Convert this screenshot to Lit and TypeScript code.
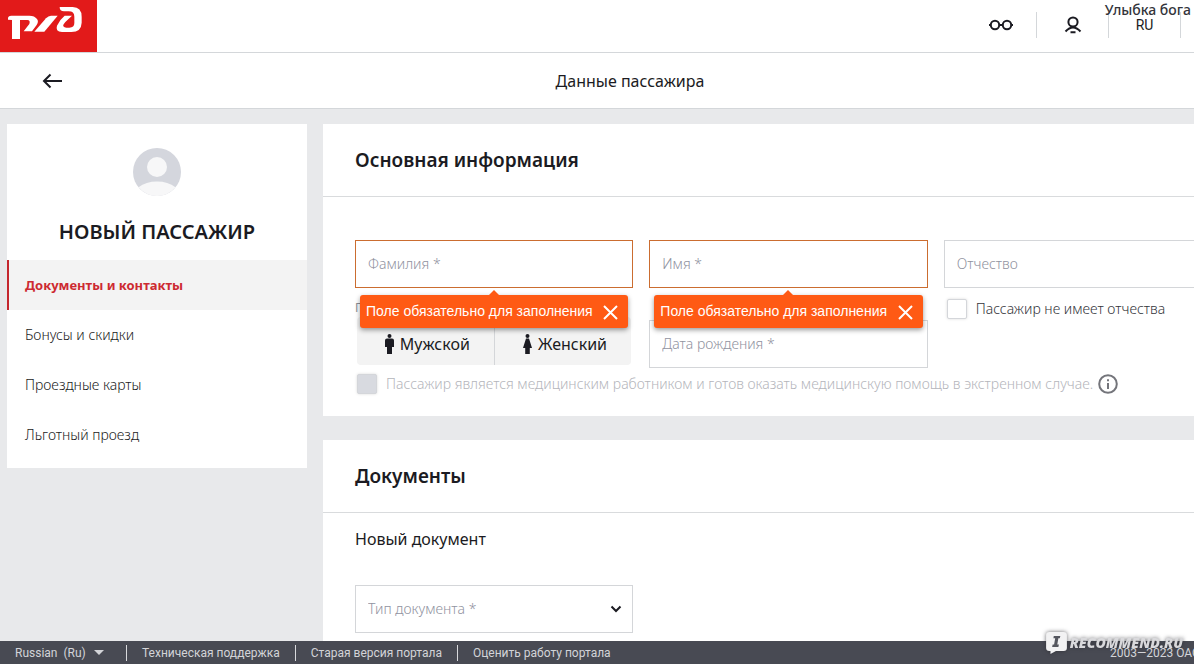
import { LitElement, html, css, svg } from "lit";
import { customElement, property } from "lit/decorators.js";
import { classMap } from "lit/directives/class-map.js";

const closeIcon = svg`<path d="M2 2 15 15M15 2 2 15" fill="none" stroke="currentColor" stroke-width="2"/>`;

@customElement("text-field")
export class TextField extends LitElement {
  @property() label = "";
  @property() error = "";

  static styles = css`
    :host { display: block; position: relative; }
    * { box-sizing: border-box; }
    .input {
      display: block; width: 100%; height: 48px; padding: 0 12px 2px;
      border: 1px solid #d4d6d9; border-radius: 0; background: #fff; outline: none;
      font: 300 14px/20px "Noto Sans", sans-serif; color: #1b1b22;
    }
    .input::placeholder { color: #9092a0; opacity: 1; }
    .invalid { border-color: #cb6d30; }
    .tip {
      position: absolute; z-index: 2; left: 5px; right: 5px; top: 55px; height: 33px;
      display: flex; align-items: center; justify-content: space-between;
      padding: 0 9px 1px 6px; border-radius: 3px; background: #ff5a14; color: #fff;
      box-shadow: 0 2px 5px rgba(0, 0, 0, 0.4);
      font: 14px/20px "Liberation Sans", sans-serif; white-space: nowrap;
    }
    .tip::before {
      content: ""; position: absolute; left: 50%; top: -5px; margin-left: -5px;
      border: 5px solid transparent; border-top: 0; border-bottom-color: #ff5a14;
    }
    .close { padding: 0; border: 0; background: none; color: #fff; width: 17px; height: 15px; }
    .close svg { display: block; }
  `;

  render() {
    return html`
      <input class=${classMap({ input: true, invalid: !!this.error })} type="text"
        placeholder=${this.label} aria-label=${this.label} aria-invalid=${this.error ? "true" : "false"}>
      ${this.error ? html`
        <div class="tip" role="alert">
          <span>${this.error}</span>
          <button class="close" type="button" aria-label="Закрыть">
            <svg width="17" height="17" viewBox="0 0 17 17">${closeIcon}</svg>
          </button>
        </div>` : ""}
    `;
  }
}

@customElement("app-root")
export class AppRoot extends LitElement {
  private menu = ["Документы и контакты", "Бонусы и скидки", "Проездные карты", "Льготный проезд"];
  private links = ["Техническая поддержка", "Старая версия портала", "Оценить работу портала"];

  static styles = css`
    :host {
      display: flex; flex-direction: column; position: relative; height: 100vh; overflow: hidden;
      background: #e8e9eb; color: #1b1b22; font: 14px/20px "Noto Sans", sans-serif;
    }
    * { box-sizing: border-box; }
    h1, h2, h3, p { margin: 0; }
    a { color: inherit; text-decoration: none; }
    button { font: inherit; color: inherit; border: 0; padding: 0; background: none; }
    svg { display: block; flex: none; }

    .top, .titlebar, .body, .footer { min-width: 1260px; flex: none; }
    .top { display: flex; justify-content: space-between; height: 53px; background: #fff; border-bottom: 1px solid #d4d7da; }
    .logo { width: 97px; height: 52px; background: #e21a1a; }
    .tools { display: flex; align-items: center; height: 50px; padding-right: 7px; }
    .tool { display: flex; align-items: center; justify-content: center; width: 72px; height: 26px; border-right: 1px solid #d4d7da; font-family: Roboto, sans-serif; }
    .spare { border-right: 0; }

    .titlebar { display: grid; grid-template-columns: 1fr auto 1fr; align-items: center; height: 56px; padding: 0 42px; background: #fff; border-bottom: 1px solid #d4d7da; }
    .back { width: 20px; }
    .title { font-size: 16px; font-weight: 400; line-height: 24px; }

    .body { display: flex; align-items: flex-start; gap: 16px; padding: 15px 6px 0 7px; flex: 1 1 0; min-height: 0; }
    .side { flex: none; width: 300px; padding: 24px 0 8px; background: #fff; }
    .avatar { margin: 0 auto; }
    .name { padding: 20px 0 12px; text-align: center; font-size: 20px; line-height: 32px; font-weight: 600; text-transform: uppercase; }
    .item { display: flex; align-items: center; height: 50px; padding-left: 18px; font-weight: 300; }
    .current { padding-left: 16px; border-left: 2px solid #c4262e; background: #f3f3f3; color: #cd2a31; font-size: 13px; font-weight: 700; }

    .main { flex: 1; display: flex; flex-direction: column; gap: 24px; min-width: 0; }
    .card { background: #fff; }
    .heading { height: 73px; padding: 24px 32px; border-bottom: 1px solid #d9dbdd; font-size: 19px; line-height: 24px; font-weight: 600; }
    .grid { display: grid; grid-template-columns: repeat(3, minmax(0, 1fr)); column-gap: 16px; padding: 43px 32px 22px; }
    .required { z-index: 1; }
    .date { margin-top: 32px; }
    .gender { display: flex; flex-direction: column; padding: 11px 2px 0; }
    .caption { margin-left: -2px; font-size: 12px; line-height: 18px; color: #8d8e96; }
    .choices { display: flex; border-radius: 4px; background: #f3f3f3; }
    .choice { flex: 1; display: flex; align-items: center; justify-content: center; gap: 6px; height: 48px; padding: 6px 0 0 4px; font-size: 16px; }
    .choice + .choice { border-left: 1px solid #d4d6d9; }
    .check { display: flex; align-items: center; gap: 9px; height: 20px; font-weight: 300; color: #33343a; white-space: nowrap; }
    .nomiddle { margin: 11px 0 0 3px; }
    .medic { grid-column: 1 / -1; display: flex; align-items: center; gap: 5px; padding: 6px 0 0 2px; }
    .medic .check { color: #b4b5bb; }
    .box { appearance: none; flex: none; width: 20px; height: 20px; margin: 0; background: #fff; border: 1px solid #d4d6da; border-radius: 2px; box-shadow: 0 0 3px rgba(0, 0, 0, 0.15); }
    .box:disabled { background: #d8dae0; }

    .docs { padding: 14px 32px 32px; }
    .sub { font-size: 16px; line-height: 24px; font-weight: 400; }
    .pick { position: relative; width: 278px; margin-top: 34px; }
    .select { appearance: none; display: block; width: 100%; height: 48px; padding: 0 12px; border: 1px solid #d4d6d9; border-radius: 0; background: #fff; color: #9092a0; font: 300 14px/20px "Noto Sans", sans-serif; }
    .chev { position: absolute; right: 11px; top: 19px; pointer-events: none; }

    .footer { display: flex; align-items: center; height: 23px; background: #484a53; color: #d3d4d8; font: 12px/16px Roboto, sans-serif; }
    .footlang { display: flex; align-items: center; gap: 8px; width: 126px; padding-left: 15px; white-space: pre; }
    .footlink { border-left: 1px solid #d8d9dc; padding: 0 15px; }
    .copy { position: relative; z-index: 4; margin-left: auto; padding-right: 18px; }

    .user { position: absolute; right: 3px; top: 0; font: 500 14px/20px "Noto Sans", sans-serif; color: #33343a; }
    .mark { position: absolute; z-index: 3; right: 11px; bottom: 9px; display: flex; align-items: center; gap: 2px; filter: drop-shadow(0 0 2px rgba(40, 40, 45, 0.7)); color: #d9d9dc; font: italic 800 14px/20px "Open Sans", sans-serif; }
  `;

  render() {
    return html`
      <header class="top">
        <a class="logo" href="#" aria-label="РЖД">
          <svg width="97" height="52" viewBox="0 0 291 156" fill="#fff">
            <path d="M24 59V55Q24 47 34 47H88Q104 47 111 57Q117 65 110 75L96 94H71L88 72Q92 60 82 60H60V117H36V60Z"/>
            <path d="M103 95 138 55Q145 47 153 47H173L133 95Z"/>
            <path d="M179 21H218Q245 22 245 50V68Q244 96 214 96H186Q165 95 171 77Q178 60 194 47H216L196 66Q188 75 190 79Q193 83 199 83H208Q223 83 223 69V50Q223 34 206 34H192Q179 34 179 21Z"/>
          </svg>
        </a>
        <div class="tools">
          <button class="tool" type="button" aria-label="Версия для слабовидящих">
            <svg width="24" height="12" viewBox="0 0 24 12" fill="none" stroke="#1b1b22" stroke-width="2">
              <circle cx="6" cy="6" r="4.2"/><circle cx="18" cy="6" r="4.2"/><path d="M10 6h4M0 6h2M22 6h2"/>
            </svg>
          </button>
          <button class="tool" type="button" aria-label="Личный кабинет">
            <svg width="18" height="18" viewBox="0 0 18 18" fill="none" stroke="#1b1b22" stroke-width="2">
              <circle cx="9" cy="6" r="4.6"/><path d="M1.500 15.500Q9 7.500 16.500 15.500M6.500 16.300h5"/>
            </svg>
          </button>
          <button class="tool" type="button">RU</button>
          <span class="tool spare"></span>
        </div>
      </header>
      <div class="titlebar">
        <button class="back" type="button" aria-label="Назад">
          <svg width="20" height="16" viewBox="0 0 20 16" fill="none" stroke="#1b1b22" stroke-width="2"><path d="M20 8H2M8.500 1.500 2 8 8.500 14.500"/></svg>
        </button>
        <h1 class="title">Данные пассажира</h1>
      </div>
      <div class="body">
        <aside class="side">
          <svg class="avatar" width="48" height="48" viewBox="0 0 48 48">
            <circle cx="24" cy="24" r="24" fill="#d4d6dd"/><circle cx="24" cy="19" r="10" fill="#f7f7f8"/>
            <path d="M5.500 39.300Q13 33.500 24 33.500T42.500 39.300A24 24 0 0 1 5.500 39.300Z" fill="#f7f7f8"/>
          </svg>
          <h2 class="name">Новый пассажир</h2>
          <nav>
            ${this.menu.map((m, i) => html`<a class=${classMap({ item: true, current: i === 0 })} href="#">${m}</a>`)}
          </nav>
        </aside>
        <main class="main">
          <section class="card">
            <h2 class="heading">Основная информация</h2>
            <div class="grid">
              <text-field class="required" label="Фамилия *" error="Поле обязательно для заполнения"></text-field>
              <text-field class="required" label="Имя *" error="Поле обязательно для заполнения"></text-field>
              <text-field label="Отчество"></text-field>
              <div class="gender" role="group" aria-labelledby="sex">
                <span class="caption" id="sex">Пол</span>
                <div class="choices">
                  <button class="choice" type="button">
                    <svg width="9" height="20" viewBox="0 0 9 20" fill="#1b1b22"><circle cx="4.500" cy="2" r="2"/><path d="M2 4.500h5Q9 4.500 9 6.500V13H7V20H2V13H0V6.500Q0 4.500 2 4.500Z"/></svg>
                    Мужской
                  </button>
                  <button class="choice" type="button">
                    <svg width="9" height="20" viewBox="0 0 9 20" fill="#1b1b22"><circle cx="4.500" cy="2" r="2"/><path d="M3 4.500h3L9 14H6.800V20H2.200V14H0Z"/></svg>
                    Женский
                  </button>
                </div>
              </div>
              <text-field class="date" label="Дата рождения *"></text-field>
              <label class="check nomiddle"><input class="box" type="checkbox">Пассажир не имеет отчества</label>
              <div class="medic">
                <label class="check"><input class="box" type="checkbox" disabled>Пассажир является медицинским работником и готов оказать медицинскую помощь в экстренном случае.</label>
                <button type="button" aria-label="Подробнее">
                  <svg width="20" height="20" viewBox="0 0 20 20" fill="none" stroke="#74757b" stroke-width="2"><circle cx="10" cy="10" r="8.800"/><path d="M10 9v6M10 5.200v2"/></svg>
                </button>
              </div>
            </div>
          </section>
          <section class="card">
            <h2 class="heading">Документы</h2>
            <div class="docs">
              <h3 class="sub">Новый документ</h3>
              <div class="pick">
                <select class="select" aria-label="Тип документа"><option>Тип документа *</option></select>
                <svg class="chev" width="12" height="10" viewBox="0 0 12 10" fill="none" stroke="#1b1b22" stroke-width="2"><path d="M1.500 2.500 6 7 10.500 2.500"/></svg>
              </div>
            </div>
          </section>
        </main>
      </div>
      <footer class="footer">
        <button class="footlang" type="button">Russian  (Ru)<svg width="10" height="5" viewBox="0 0 10 5" fill="currentColor"><path d="M0 0H10L5 5Z"/></svg></button>
        ${this.links.map((l) => html`<a class="footlink" href="#">${l}</a>`)}
        <p class="copy">2003—2023 ОАО «РЖД»</p>
      </footer>
      <div class="user">Улыбка бога</div>
      <div class="mark">
        <svg width="23" height="24" viewBox="0 0 21 24" preserveAspectRatio="none"><path d="M4 1H17Q20 1 20 4V17Q20 20 17 20H10L5 23V20H4Q1 20 1 17V4Q1 1 4 1Z" fill="#f2f2f3"/><path d="M8 5h6l-.5 2.200h-1.300l-1 6.300h1.500L12.200 16H6.500L7 13.500h1.300l1-6.300H7.700Z" fill="#55575f"/></svg>
        <span>RECOMMEND.RU</span>
      </div>
    `;
  }
}
